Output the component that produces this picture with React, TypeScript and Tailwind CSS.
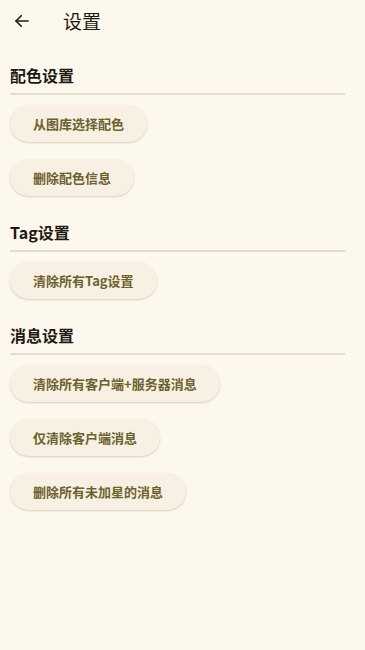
import React from "react";

const font = { fontFamily: '"Noto Sans CJK SC", "Noto Sans", sans-serif' };

function Btn({ label }: { label: string }) {
  return (
    <button className="h-[37px] self-start rounded-full bg-[#f7f0e3] px-[23px] text-[13px] font-semibold text-[#6e6130] shadow-[0_1px_2px_rgba(80,60,20,0.22)]">
      {label}
    </button>
  );
}

function Section({ title, items }: { title: string; items: string[] }) {
  return (
    <div className="flex flex-col">
      <div className="pb-[7px] text-[16px] font-bold leading-[22px] text-[#1f1b13]">{title}</div>
      <div className="mr-[20px] h-[2px] bg-[#e3dccd]" />
      <div className="flex flex-col gap-[17px] pt-[10px]">
        {items.map((t) => (
          <Btn key={t} label={t} />
        ))}
      </div>
    </div>
  );
}

export default function App() {
  return (
    <div style={font} className="min-h-[650px] w-[365px] bg-[#fdf8ee]">
      <div className="flex h-[42px] items-center pl-[13px]">
        <svg width="18" height="18" viewBox="0 0 24 24" fill="none" stroke="#1f1b13" strokeWidth="2.2" strokeLinecap="round" strokeLinejoin="round">
          <path d="M20 12H4" />
          <path d="M11 5l-7 7 7 7" />
        </svg>
        <span className="ml-[32px] text-[19px] leading-[24px] text-[#1f1b13]">设置</span>
      </div>
      <div className="flex flex-col gap-[25px] pl-[10px] pt-[22px]">
        <Section title="配色设置" items={["从图库选择配色", "删除配色信息"]} />
        <Section title="Tag设置" items={["清除所有Tag设置"]} />
        <Section title="消息设置" items={["清除所有客户端+服务器消息", "仅清除客户端消息", "删除所有未加星的消息"]} />
      </div>
    </div>
  );
}
